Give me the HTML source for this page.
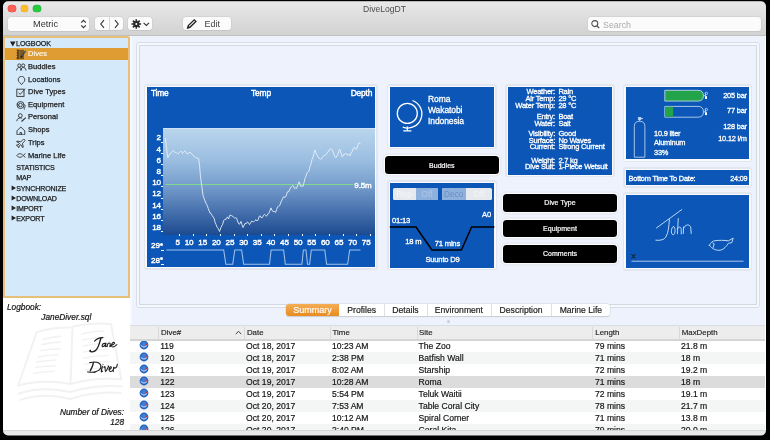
<!DOCTYPE html><html><head><meta charset="utf-8"><style>
*{margin:0;padding:0;box-sizing:border-box}
html,body{width:770px;height:440px;overflow:hidden;background:#000}
body{font-family:"Liberation Sans",sans-serif;position:relative}
.a{position:absolute}
.t{white-space:nowrap;line-height:1}
#win{left:0;top:0;width:770px;height:440px;background:#fff;will-change:transform}
.btn{background:#fbfbfb;border-radius:3px;box-shadow:0 0 0 0.5px #c9c9c9,0 0.6px 0.4px #b5b5b5}
</style></head><body><div id="win" class="a">
<div class="a" style="left:3.00px;top:1.30px;width:763.00px;height:34.30px;background:linear-gradient(#e8e8e8,#d2d2d2);border-top:1px solid #f6f6f6;border-bottom:1px solid #c0c0c0"></div>
<div class="a" style="left:7.80px;top:4.50px;width:7.80px;height:7.80px;border-radius:50%;background:#fc5f57;box-shadow:0 0 0 0.35px #e0443e"></div>
<div class="a" style="left:20.50px;top:4.50px;width:7.80px;height:7.80px;border-radius:50%;background:#fdbc2e;box-shadow:0 0 0 0.35px #dea123"></div>
<div class="a" style="left:33.40px;top:4.50px;width:7.80px;height:7.80px;border-radius:50%;background:#29c840;box-shadow:0 0 0 0.35px #1aab29"></div>
<div class="a t" style="left:284.60px;width:200px;text-align:center;top:5.00px;font-size:8.6px;color:#4d4d4d;">DiveLogDT</div>
<div class="a btn" style="left:8.00px;top:16.90px;width:81.30px;height:14.30px;"></div>
<div class="a t" style="left:-54.50px;width:200px;text-align:center;top:20.00px;font-size:9.2px;color:#333;">Metric</div>
<svg class="a" style="left:80.3px;top:19px" width="7" height="10" viewBox="0 0 7 10"><path d="M1.2 3.6L3.5 1.3L5.8 3.6M1.2 6.4L3.5 8.7L5.8 6.4" fill="none" stroke="#333" stroke-width="1.1"/></svg>
<div class="a btn" style="left:94.80px;top:17.40px;width:28.30px;height:13.10px;"></div>
<div class="a" style="left:108.50px;top:17.40px;width:0.50px;height:13.10px;background:#d4d4d4"></div>
<svg class="a" style="left:98.5px;top:19px" width="7" height="10" viewBox="0 0 7 10"><path d="M5 1.2L1.8 5L5 8.8" fill="none" stroke="#333" stroke-width="1.1"/></svg>
<svg class="a" style="left:112.5px;top:19px" width="7" height="10" viewBox="0 0 7 10"><path d="M2 1.2L5.2 5L2 8.8" fill="none" stroke="#333" stroke-width="1.1"/></svg>
<div class="a btn" style="left:128.40px;top:17.40px;width:23.90px;height:13.10px;"></div>
<svg class="a" style="left:130.6px;top:18.7px" width="20" height="10" viewBox="0 0 20 10"><g transform="translate(5.3,5)" fill="#2a2a2a"><circle r="3.1"/><path d="M0 -4.8V4.8M-4.8 0H4.8M-3.4 -3.4L3.4 3.4M-3.4 3.4L3.4 -3.4" stroke="#2a2a2a" stroke-width="1.6"/><circle r="1" fill="#fbfbfb"/></g><path d="M12.6 3.8L15.3 6.4L18 3.8" fill="none" stroke="#333" stroke-width="1.1"/></svg>
<div class="a btn" style="left:183.10px;top:17.40px;width:47.60px;height:13.10px;"></div>
<svg class="a" style="left:185.8px;top:17.5px" width="12" height="12" viewBox="0 0 12 12"><path d="M1.6 10L2.3 7.6L8.3 1.8L9.9 3.4L3.9 9.3Z" fill="none" stroke="#222" stroke-width="1.3"/><path d="M1.6 10L2.3 7.6L3.9 9.3Z" fill="#222"/></svg>
<div class="a t" style="left:204.60px;top:20.00px;font-size:9px;color:#444;">Edit</div>
<div class="a btn" style="left:588.40px;top:17.40px;width:173.00px;height:13.80px;"></div>
<svg class="a" style="left:590px;top:19px" width="10" height="10" viewBox="0 0 10 10"><circle cx="4.8" cy="4.6" r="3" fill="none" stroke="#4a4a4a" stroke-width="1.05"/><path d="M7 6.9L9.2 9.1" stroke="#4a4a4a" stroke-width="1.3"/></svg>
<div class="a t" style="left:603.10px;top:21.00px;font-size:8.8px;color:#a9a9a9;">Search</div>
<div class="a" style="left:3.00px;top:35.50px;width:127.00px;height:262.00px;background:#d4eafb;border:2px solid #e8bf78;border-radius:0 2px 0 0"></div>
<div class="a" style="left:5.00px;top:48.30px;width:123.00px;height:11.30px;background:#df9c33"></div>
<svg class="a" style="left:10.3px;top:40.6px" width="6" height="6" viewBox="0 0 6 6"><path d="M0 0.6H5.6L2.8 5.6Z" fill="#222"/></svg>
<div class="a t" style="left:16.10px;top:41.00px;font-size:7.1px;color:#1c1c1c;-webkit-text-stroke:0.25px #1c1c1c;letter-spacing:-0.1px;">LOGBOOK</div>
<div class="a t" style="left:28.00px;top:50.00px;font-size:7.5px;color:#fdf6ea;-webkit-text-stroke:0.18px #fdf6ea;letter-spacing:0.05px;">Dives</div>
<div class="a t" style="left:28.00px;top:63.00px;font-size:7.5px;color:#1c1c1c;-webkit-text-stroke:0.25px #1c1c1c;letter-spacing:0.05px;">Buddies</div>
<div class="a t" style="left:28.00px;top:76.00px;font-size:7.5px;color:#1c1c1c;-webkit-text-stroke:0.25px #1c1c1c;letter-spacing:0.05px;">Locations</div>
<div class="a t" style="left:28.00px;top:88.00px;font-size:7.5px;color:#1c1c1c;-webkit-text-stroke:0.25px #1c1c1c;letter-spacing:0.05px;">Dive Types</div>
<div class="a t" style="left:28.00px;top:101.00px;font-size:7.5px;color:#1c1c1c;-webkit-text-stroke:0.25px #1c1c1c;letter-spacing:0.05px;">Equipment</div>
<div class="a t" style="left:28.00px;top:113.00px;font-size:7.5px;color:#1c1c1c;-webkit-text-stroke:0.25px #1c1c1c;letter-spacing:0.05px;">Personal</div>
<div class="a t" style="left:28.00px;top:126.00px;font-size:7.5px;color:#1c1c1c;-webkit-text-stroke:0.25px #1c1c1c;letter-spacing:0.05px;">Shops</div>
<div class="a t" style="left:28.00px;top:139.00px;font-size:7.5px;color:#1c1c1c;-webkit-text-stroke:0.25px #1c1c1c;letter-spacing:0.05px;">Trips</div>
<div class="a t" style="left:28.00px;top:152.00px;font-size:7.5px;color:#1c1c1c;-webkit-text-stroke:0.25px #1c1c1c;letter-spacing:0.05px;">Marine Life</div>
<div class="a t" style="left:16.20px;top:165.00px;font-size:7.1px;color:#1c1c1c;-webkit-text-stroke:0.25px #1c1c1c;letter-spacing:-0.15px;">STATISTICS</div>
<div class="a t" style="left:16.20px;top:175.00px;font-size:7.1px;color:#1c1c1c;-webkit-text-stroke:0.25px #1c1c1c;letter-spacing:-0.15px;">MAP</div>
<div class="a t" style="left:16.20px;top:186.00px;font-size:7.1px;color:#1c1c1c;-webkit-text-stroke:0.25px #1c1c1c;letter-spacing:-0.15px;">SYNCHRONIZE</div>
<div class="a t" style="left:16.20px;top:196.00px;font-size:7.1px;color:#1c1c1c;-webkit-text-stroke:0.25px #1c1c1c;letter-spacing:-0.15px;">DOWNLOAD</div>
<div class="a t" style="left:16.20px;top:206.00px;font-size:7.1px;color:#1c1c1c;-webkit-text-stroke:0.25px #1c1c1c;letter-spacing:-0.15px;">IMPORT</div>
<div class="a t" style="left:16.20px;top:216.00px;font-size:7.1px;color:#1c1c1c;-webkit-text-stroke:0.25px #1c1c1c;letter-spacing:-0.15px;">EXPORT</div>
<svg class="a" style="left:10.8px;top:184.8px" width="6" height="6" viewBox="0 0 6 6"><path d="M0.6 0.4V5.6L5 3Z" fill="#222"/></svg>
<svg class="a" style="left:10.8px;top:195.0px" width="6" height="6" viewBox="0 0 6 6"><path d="M0.6 0.4V5.6L5 3Z" fill="#222"/></svg>
<svg class="a" style="left:10.8px;top:205.20000000000002px" width="6" height="6" viewBox="0 0 6 6"><path d="M0.6 0.4V5.6L5 3Z" fill="#222"/></svg>
<svg class="a" style="left:10.8px;top:215.4px" width="6" height="6" viewBox="0 0 6 6"><path d="M0.6 0.4V5.6L5 3Z" fill="#222"/></svg>
<svg class="a" style="left:16px;top:48.5px" width="11" height="11" viewBox="0 0 11 11"><rect x="0.8" y="0.8" width="7.2" height="9.4" fill="#7d5a22"/><rect x="0.8" y="0.8" width="1.8" height="9.4" fill="#5a3d12"/><path d="M3.5 2V9.2" stroke="#a07a3a" stroke-width="0.5"/><path d="M0.3 2.5H1.2M0.3 5H1.2M0.3 7.5H1.2" stroke="#f6c64a" stroke-width="0.9"/><path d="M5.4 7.6L9.6 1.8" stroke="#2f4a66" stroke-width="1.3"/><path d="M5 8.3L5.8 7.2" stroke="#111" stroke-width="1.5"/></svg>
<svg class="a" style="left:16px;top:62.5px" width="11" height="8" viewBox="0 0 11 8"><circle cx="3.3" cy="2.5" r="1.6" stroke="#3a3a3a" stroke-width="0.95" fill="none"/><circle cx="7.2" cy="2.5" r="1.6" stroke="#3a3a3a" stroke-width="0.95" fill="none"/><path d="M0.6 7.5C0.8 5.2 2 4.5 3.3 4.5S5.6 5.2 5.8 7.5M4.4 7.5C4.6 5.2 5.9 4.5 7.2 4.5S9.8 5.2 10 7.5" stroke="#3a3a3a" stroke-width="0.95" fill="none"/></svg>
<svg class="a" style="left:16.5px;top:75.5px" width="9" height="9.5" viewBox="0 0 9 9.5"><path d="M4.5 8.6L2.6 6.4A3.3 3.3 0 1 1 6.4 6.4Z" stroke="#3a3a3a" stroke-width="0.95" fill="none"/></svg>
<svg class="a" style="left:16px;top:87.5px" width="10" height="9" viewBox="0 0 10 9"><rect x="0.8" y="1.2" width="7.2" height="7.2" stroke="#3a3a3a" stroke-width="0.95" fill="none"/><path d="M2.5 4.6L4.2 6.4L9.2 0.8" stroke="#3a3a3a" stroke-width="0.9" fill="none"/></svg>
<svg class="a" style="left:16px;top:99.5px" width="11" height="10" viewBox="0 0 11 10"><circle cx="4.5" cy="5" r="3.5" stroke="#3a3a3a" stroke-width="0.95" fill="none"/><circle cx="4.5" cy="5" r="1.8" stroke="#3a3a3a" stroke-width="0.95" fill="none"/><path d="M1.2 3.6L3 6.4M7.6 4.5C9 4.5 9.6 6 8.8 7.2S7.8 9.2 8.8 9.5" stroke="#3a3a3a" stroke-width="0.95" fill="none"/></svg>
<svg class="a" style="left:16px;top:113px" width="11" height="9" viewBox="0 0 11 9"><circle cx="4.3" cy="2.6" r="1.9" stroke="#3a3a3a" stroke-width="0.95" fill="none"/><path d="M0.8 8.2C1 5.8 2.4 5 4.3 5C5.2 5 5.8 5.2 6.2 5.5" stroke="#3a3a3a" stroke-width="0.95" fill="none"/><path d="M5.5 8.5L9.8 4.6" stroke="#3a3a3a" stroke-width="1.2"/></svg>
<svg class="a" style="left:16.2px;top:125.5px" width="10" height="9.5" viewBox="0 0 10 9.5"><path d="M1 4.8L4.8 1L8.8 4.8V8.8H1Z" stroke="#3a3a3a" stroke-width="0.95" fill="none"/><path d="M4 8.8V6.6H5.6V8.8" stroke="#3a3a3a" stroke-width="0.95" fill="none"/></svg>
<svg class="a" style="left:16.2px;top:138.6px" width="10" height="9" viewBox="0 0 10 9"><path d="M8.6 0.6C9.3 0.9 9.2 1.7 8.4 2.5L6.4 4.4L7.3 8.2L6.5 8.6L4.8 5.6L3 7.2L3.2 8.4L2.6 8.8L1.8 7.2L0.4 6.4L0.8 5.8L2 6L3.6 4.4L0.6 2.7L1 2L4.8 2.8L6.8 0.9C7.5 0.3 8.2 0.3 8.6 0.6Z" stroke="#3a3a3a" stroke-width="0.95" fill="none"/></svg>
<svg class="a" style="left:16.2px;top:152.3px" width="10" height="7" viewBox="0 0 10 7"><path d="M0.8 3.5C2.5 1.2 5.2 1 7.2 3.5C5.2 6 2.5 5.8 0.8 3.5ZM7.2 3.5L9.4 1.6M7.2 3.5L9.4 5.4" stroke="#3a3a3a" stroke-width="0.95" fill="none"/></svg>
<svg class="a" style="left:0;top:0" width="770" height="440" viewBox="0 0 770 440"><g fill="none" stroke="#f2f2f2" stroke-width="2" stroke-linecap="round" stroke-linejoin="round"><path d="M18.2 385.5L36.6 332.3Q52 327 70 327.5"/><path d="M74.3 326.2Q92 322 111 324.1L121.3 379.3"/><path d="M72.5 327L70.5 384"/><path d="M18.2 385.5Q42 379 70.5 384Q95 377 121.3 379.3"/><path d="M18.5 393.7Q42 386 70 392Q96 384 122 386.5"/><path d="M20.5 399.8Q44 392 70 399Q96 391 121 393"/><path d="M42.7 339.5Q52 337 60.1 336.4M41.7 344.6Q51 342.5 60.1 342.1M40.7 350.7Q50 348.8 60.1 348.7M38.6 356.9Q48 355 58 354.8M36.6 362Q46 360.5 56 360M35.6 367.5Q45 366 55 365.8M33.5 373.2Q43 371.5 54 371.2" stroke-width="1.6"/><path d="M82 334Q92 331 104 331M82.5 340Q93 337.5 105 337.5M83 346Q94 343.5 106 343.5M83.5 352Q95 349.5 107 349.5M84 358Q96 355.5 108 355.5M84.5 364Q97 361.5 109.5 361.5M85 370Q98 367.5 111 367.5" stroke-width="1.6"/></g></svg>
<div class="a t" style="left:7.00px;top:303.00px;font-size:8.3px;color:#141414;font-style:italic;-webkit-text-stroke:0.2px #141414">Logbook:</div>
<div class="a t" style="left:41.30px;top:313.00px;font-size:8.3px;color:#141414;font-style:italic;-webkit-text-stroke:0.2px #141414">JaneDiver.sql</div>
<svg class="a" style="left:0;top:0" width="770" height="440" viewBox="0 0 770 440"><g fill="none" stroke="#1e1e1e" stroke-linecap="round" stroke-linejoin="round"><path d="M94.70 341.00C95.05 340.70 96.03 339.68 96.80 339.20C97.57 338.72 98.28 338.37 99.30 338.10C100.32 337.83 102.30 337.68 102.90 337.60" stroke-width="1.20"/><path d="M100.90 338.10C100.68 338.85 100.15 340.98 99.60 342.60C99.05 344.22 98.30 346.47 97.60 347.80C96.90 349.13 96.27 349.93 95.40 350.60C94.53 351.27 93.30 351.68 92.40 351.80C91.50 351.92 90.33 351.55 90.00 351.30C89.67 351.05 90.33 350.47 90.40 350.30" stroke-width="1.35"/><path d="M106.00 343.20C105.60 343.25 104.25 343.10 103.60 343.50C102.95 343.90 102.22 345.05 102.10 345.60C101.98 346.15 102.42 346.88 102.90 346.80C103.38 346.72 104.48 345.70 105.00 345.10C105.52 344.50 105.95 342.97 106.00 343.20C106.05 343.43 105.20 346.02 105.30 346.50C105.40 346.98 106.38 346.17 106.60 346.10" stroke-width="1.10"/><path d="M107.10 346.60C107.20 346.17 107.30 344.60 107.70 344.00C108.10 343.40 109.07 343.00 109.50 343.00C109.93 343.00 110.25 343.42 110.30 344.00C110.35 344.58 109.70 346.15 109.80 346.50C109.90 346.85 110.72 346.17 110.90 346.10" stroke-width="1.10"/><path d="M111.10 345.50C111.50 345.30 112.92 344.75 113.50 344.30C114.08 343.85 114.67 343.10 114.60 342.80C114.53 342.50 113.58 342.25 113.10 342.50C112.62 342.75 111.93 343.68 111.70 344.30C111.47 344.92 111.37 345.78 111.70 346.20C112.03 346.62 112.83 347.07 113.70 346.80C114.57 346.53 116.37 344.97 116.90 344.60" stroke-width="1.05"/><path d="M93.40 362.60C93.22 363.25 92.83 365.12 92.30 366.50C91.77 367.88 90.55 370.17 90.20 370.90" stroke-width="1.35"/><path d="M87.70 371.90C88.25 371.95 89.78 372.17 91.00 372.20C92.22 372.23 94.33 372.12 95.00 372.10" stroke-width="1.10"/><path d="M89.80 362.60C90.50 362.50 92.58 361.98 94.00 362.00C95.42 362.02 97.15 362.10 98.30 362.70C99.45 363.30 100.68 364.45 100.90 365.60C101.12 366.75 100.68 368.48 99.60 369.60C98.52 370.72 95.27 371.85 94.40 372.30" stroke-width="1.15"/><path d="M102.40 366.30C102.22 367.17 101.27 370.68 101.30 371.50C101.33 372.32 102.38 371.25 102.60 371.20" stroke-width="1.15"/><path d="M103.90 367.30C104.08 367.22 104.73 366.08 105.00 366.80C105.27 367.52 104.93 371.60 105.50 371.60C106.07 371.60 107.97 367.75 108.40 366.80C108.83 365.85 108.15 366.05 108.10 365.90" stroke-width="1.10"/><path d="M109.10 369.80C109.42 369.57 110.65 368.90 111.00 368.40C111.35 367.90 111.40 367.00 111.20 366.80C111.00 366.60 110.15 366.63 109.80 367.20C109.45 367.77 108.95 369.47 109.10 370.20C109.25 370.93 110.10 371.58 110.70 371.60C111.30 371.62 112.37 370.52 112.70 370.30" stroke-width="1.05"/><path d="M113.20 371.60C113.28 370.88 113.45 367.87 113.70 367.30C113.95 366.73 114.22 368.27 114.70 368.20C115.18 368.13 116.17 367.57 116.60 366.90C117.03 366.23 117.18 364.65 117.30 364.20" stroke-width="1.10"/><circle cx="103" cy="364.3" r="0.55" fill="#1e1e1e" stroke="none"/></g></svg>
<div class="a t" style="right:646.00px;text-align:right;top:408.00px;font-size:8.3px;color:#141414;font-style:italic;-webkit-text-stroke:0.2px #141414">Number of Dives:</div>
<div class="a t" style="right:646.00px;text-align:right;top:418.00px;font-size:8.3px;color:#141414;font-style:italic;-webkit-text-stroke:0.2px #141414">128</div>
<div class="a" style="left:130.00px;top:35.50px;width:635.00px;height:289.70px;background:#edf2fc"></div>
<div class="a" style="left:130.00px;top:35.50px;width:1.50px;height:289.70px;background:#f6f9fe"></div>
<div class="a" style="left:135.80px;top:41.80px;width:623.80px;height:265.80px;border:1px solid #d9dde5;background:#f5f8fd;border-radius:3px"></div>
<div class="a" style="left:139.00px;top:45.00px;width:617.60px;height:260.20px;border:1.5px solid #d4d9e1;background:#edf2fc"></div>
<div class="a" style="left:143.90px;top:84.10px;width:233.80px;height:185.60px;background:#e2e6ee;border-radius:3px"></div>
<div class="a" style="left:145.30px;top:85.50px;width:231.00px;height:182.80px;background:#f9fafd;border-radius:1px"></div>
<div class="a" style="left:146.60px;top:86.80px;width:228.40px;height:180.20px;background:#0b56b6"></div>
<div class="a" style="left:387.00px;top:84.10px;width:109.70px;height:65.30px;background:#e2e6ee;border-radius:3px"></div>
<div class="a" style="left:388.40px;top:85.50px;width:106.90px;height:62.50px;background:#f9fafd;border-radius:1px"></div>
<div class="a" style="left:389.70px;top:86.80px;width:104.30px;height:59.90px;background:#0b56b6"></div>
<div class="a" style="left:505.20px;top:84.10px;width:109.60px;height:93.40px;background:#e2e6ee;border-radius:3px"></div>
<div class="a" style="left:506.60px;top:85.50px;width:106.80px;height:90.60px;background:#f9fafd;border-radius:1px"></div>
<div class="a" style="left:507.90px;top:86.80px;width:104.20px;height:88.00px;background:#0b56b6"></div>
<div class="a" style="left:622.90px;top:84.20px;width:129.20px;height:78.00px;background:#e2e6ee;border-radius:3px"></div>
<div class="a" style="left:624.30px;top:85.60px;width:126.40px;height:75.20px;background:#f9fafd;border-radius:1px"></div>
<div class="a" style="left:625.60px;top:86.90px;width:123.80px;height:72.60px;background:#0b56b6"></div>
<div class="a" style="left:623.10px;top:167.20px;width:128.80px;height:20.50px;background:#e2e6ee;border-radius:3px"></div>
<div class="a" style="left:624.50px;top:168.60px;width:126.00px;height:17.70px;background:#f9fafd;border-radius:1px"></div>
<div class="a" style="left:625.80px;top:169.90px;width:123.40px;height:15.10px;background:#0b56b6"></div>
<div class="a" style="left:623.00px;top:192.30px;width:129.00px;height:78.30px;background:#e2e6ee;border-radius:3px"></div>
<div class="a" style="left:624.40px;top:193.70px;width:126.20px;height:75.50px;background:#f9fafd;border-radius:1px"></div>
<div class="a" style="left:625.70px;top:195.00px;width:123.60px;height:72.90px;background:#0b56b6"></div>
<div class="a" style="left:387.10px;top:180.30px;width:110.00px;height:90.10px;background:#e2e6ee;border-radius:3px"></div>
<div class="a" style="left:388.50px;top:181.70px;width:107.20px;height:87.30px;background:#f9fafd;border-radius:1px"></div>
<div class="a" style="left:389.80px;top:183.00px;width:104.60px;height:84.70px;background:#0b56b6"></div>
<div class="a" style="left:385.10px;top:156.00px;width:113.50px;height:18.10px;background:#000;border-radius:3.5px;box-shadow:0 0 0 1.2px #fbfcfe,0 0 0 2.4px #e6e9f0"></div>
<div class="a t" style="left:341.85px;width:200px;text-align:center;top:162.00px;font-size:7px;color:#f2f2f2;-webkit-text-stroke:0.22px #fff;letter-spacing:0.05px">Buddies</div>
<div class="a" style="left:503.10px;top:194.30px;width:113.90px;height:18.10px;background:#000;border-radius:3.5px;box-shadow:0 0 0 1.2px #fbfcfe,0 0 0 2.4px #e6e9f0"></div>
<div class="a t" style="left:460.05px;width:200px;text-align:center;top:199.00px;font-size:7px;color:#f2f2f2;-webkit-text-stroke:0.22px #fff;letter-spacing:0.05px">Dive Type</div>
<div class="a" style="left:503.10px;top:219.70px;width:113.90px;height:17.80px;background:#000;border-radius:3.5px;box-shadow:0 0 0 1.2px #fbfcfe,0 0 0 2.4px #e6e9f0"></div>
<div class="a t" style="left:460.05px;width:200px;text-align:center;top:225.00px;font-size:7px;color:#f2f2f2;-webkit-text-stroke:0.22px #fff;letter-spacing:0.05px">Equipment</div>
<div class="a" style="left:503.10px;top:245.20px;width:113.90px;height:18.00px;background:#000;border-radius:3.5px;box-shadow:0 0 0 1.2px #fbfcfe,0 0 0 2.4px #e6e9f0"></div>
<div class="a t" style="left:460.05px;width:200px;text-align:center;top:250.00px;font-size:7px;color:#f2f2f2;-webkit-text-stroke:0.22px #fff;letter-spacing:0.05px">Comments</div>
<div class="a t" style="left:150.90px;top:89.00px;font-size:8.4px;color:#ffffff;-webkit-text-stroke:0.42px #fff;letter-spacing:-0.15px">Time</div>
<div class="a t" style="left:161.00px;width:200px;text-align:center;top:89.00px;font-size:8.4px;color:#ffffff;-webkit-text-stroke:0.42px #fff;letter-spacing:-0.15px">Temp</div>
<div class="a t" style="right:397.70px;text-align:right;top:89.00px;font-size:8.4px;color:#ffffff;-webkit-text-stroke:0.42px #fff;letter-spacing:-0.15px">Depth</div>
<div class="a" style="left:162.50px;top:128.30px;width:212.50px;height:107.20px;background:linear-gradient(#b9d5ed 0%,#9abde0 30%,#789fcd 52%,#4a74b0 76%,#1c4a8f 100%);border-top:0.6px solid #cfe2f4"></div>
<div class="a t" style="right:609.00px;text-align:right;top:134.00px;font-size:8.1px;color:#ffffff;-webkit-text-stroke:0.4px #fff;letter-spacing:-0.1px">2</div>
<div class="a" style="left:161.20px;top:141.60px;width:2.20px;height:0.80px;background:#fff"></div>
<div class="a t" style="right:609.00px;text-align:right;top:146.00px;font-size:8.1px;color:#ffffff;-webkit-text-stroke:0.4px #fff;letter-spacing:-0.1px">4</div>
<div class="a" style="left:161.20px;top:152.80px;width:2.20px;height:0.80px;background:#fff"></div>
<div class="a t" style="right:609.00px;text-align:right;top:157.00px;font-size:8.1px;color:#ffffff;-webkit-text-stroke:0.4px #fff;letter-spacing:-0.1px">6</div>
<div class="a" style="left:161.20px;top:164.00px;width:2.20px;height:0.80px;background:#fff"></div>
<div class="a t" style="right:609.00px;text-align:right;top:168.00px;font-size:8.1px;color:#ffffff;-webkit-text-stroke:0.4px #fff;letter-spacing:-0.1px">8</div>
<div class="a" style="left:161.20px;top:175.20px;width:2.20px;height:0.80px;background:#fff"></div>
<div class="a t" style="right:609.00px;text-align:right;top:179.00px;font-size:8.1px;color:#ffffff;-webkit-text-stroke:0.4px #fff;letter-spacing:-0.1px">10</div>
<div class="a" style="left:161.20px;top:186.40px;width:2.20px;height:0.80px;background:#fff"></div>
<div class="a t" style="right:609.00px;text-align:right;top:190.00px;font-size:8.1px;color:#ffffff;-webkit-text-stroke:0.4px #fff;letter-spacing:-0.1px">12</div>
<div class="a" style="left:161.20px;top:197.60px;width:2.20px;height:0.80px;background:#fff"></div>
<div class="a t" style="right:609.00px;text-align:right;top:202.00px;font-size:8.1px;color:#ffffff;-webkit-text-stroke:0.4px #fff;letter-spacing:-0.1px">14</div>
<div class="a" style="left:161.20px;top:208.80px;width:2.20px;height:0.80px;background:#fff"></div>
<div class="a t" style="right:609.00px;text-align:right;top:213.00px;font-size:8.1px;color:#ffffff;-webkit-text-stroke:0.4px #fff;letter-spacing:-0.1px">16</div>
<div class="a" style="left:161.20px;top:220.00px;width:2.20px;height:0.80px;background:#fff"></div>
<div class="a t" style="right:609.00px;text-align:right;top:224.00px;font-size:8.1px;color:#ffffff;-webkit-text-stroke:0.4px #fff;letter-spacing:-0.1px">18</div>
<div class="a" style="left:161.20px;top:231.20px;width:2.20px;height:0.80px;background:#fff"></div>
<div class="a" style="left:179.05px;top:234.30px;width:0.90px;height:2.00px;background:#f0f4fa"></div>
<div class="a t" style="right:590.20px;text-align:right;top:239.00px;font-size:8.1px;color:#ffffff;-webkit-text-stroke:0.4px #fff;letter-spacing:-0.1px">5</div>
<div class="a" style="left:192.68px;top:234.30px;width:0.90px;height:2.00px;background:#f0f4fa"></div>
<div class="a t" style="right:576.57px;text-align:right;top:239.00px;font-size:8.1px;color:#ffffff;-webkit-text-stroke:0.4px #fff;letter-spacing:-0.1px">10</div>
<div class="a" style="left:206.31px;top:234.30px;width:0.90px;height:2.00px;background:#f0f4fa"></div>
<div class="a t" style="right:562.93px;text-align:right;top:239.00px;font-size:8.1px;color:#ffffff;-webkit-text-stroke:0.4px #fff;letter-spacing:-0.1px">15</div>
<div class="a" style="left:219.95px;top:234.30px;width:0.90px;height:2.00px;background:#f0f4fa"></div>
<div class="a t" style="right:549.30px;text-align:right;top:239.00px;font-size:8.1px;color:#ffffff;-webkit-text-stroke:0.4px #fff;letter-spacing:-0.1px">20</div>
<div class="a" style="left:233.58px;top:234.30px;width:0.90px;height:2.00px;background:#f0f4fa"></div>
<div class="a t" style="right:535.67px;text-align:right;top:239.00px;font-size:8.1px;color:#ffffff;-webkit-text-stroke:0.4px #fff;letter-spacing:-0.1px">25</div>
<div class="a" style="left:247.21px;top:234.30px;width:0.90px;height:2.00px;background:#f0f4fa"></div>
<div class="a t" style="right:522.04px;text-align:right;top:239.00px;font-size:8.1px;color:#ffffff;-webkit-text-stroke:0.4px #fff;letter-spacing:-0.1px">30</div>
<div class="a" style="left:260.85px;top:234.30px;width:0.90px;height:2.00px;background:#f0f4fa"></div>
<div class="a t" style="right:508.40px;text-align:right;top:239.00px;font-size:8.1px;color:#ffffff;-webkit-text-stroke:0.4px #fff;letter-spacing:-0.1px">35</div>
<div class="a" style="left:274.48px;top:234.30px;width:0.90px;height:2.00px;background:#f0f4fa"></div>
<div class="a t" style="right:494.77px;text-align:right;top:239.00px;font-size:8.1px;color:#ffffff;-webkit-text-stroke:0.4px #fff;letter-spacing:-0.1px">40</div>
<div class="a" style="left:288.11px;top:234.30px;width:0.90px;height:2.00px;background:#f0f4fa"></div>
<div class="a t" style="right:481.14px;text-align:right;top:239.00px;font-size:8.1px;color:#ffffff;-webkit-text-stroke:0.4px #fff;letter-spacing:-0.1px">45</div>
<div class="a" style="left:301.74px;top:234.30px;width:0.90px;height:2.00px;background:#f0f4fa"></div>
<div class="a t" style="right:467.51px;text-align:right;top:239.00px;font-size:8.1px;color:#ffffff;-webkit-text-stroke:0.4px #fff;letter-spacing:-0.1px">50</div>
<div class="a" style="left:315.38px;top:234.30px;width:0.90px;height:2.00px;background:#f0f4fa"></div>
<div class="a t" style="right:453.87px;text-align:right;top:239.00px;font-size:8.1px;color:#ffffff;-webkit-text-stroke:0.4px #fff;letter-spacing:-0.1px">55</div>
<div class="a" style="left:329.01px;top:234.30px;width:0.90px;height:2.00px;background:#f0f4fa"></div>
<div class="a t" style="right:440.24px;text-align:right;top:239.00px;font-size:8.1px;color:#ffffff;-webkit-text-stroke:0.4px #fff;letter-spacing:-0.1px">60</div>
<div class="a" style="left:342.64px;top:234.30px;width:0.90px;height:2.00px;background:#f0f4fa"></div>
<div class="a t" style="right:426.61px;text-align:right;top:239.00px;font-size:8.1px;color:#ffffff;-webkit-text-stroke:0.4px #fff;letter-spacing:-0.1px">65</div>
<div class="a" style="left:356.27px;top:234.30px;width:0.90px;height:2.00px;background:#f0f4fa"></div>
<div class="a t" style="right:412.98px;text-align:right;top:239.00px;font-size:8.1px;color:#ffffff;-webkit-text-stroke:0.4px #fff;letter-spacing:-0.1px">70</div>
<div class="a" style="left:369.91px;top:234.30px;width:0.90px;height:2.00px;background:#f0f4fa"></div>
<div class="a t" style="right:399.34px;text-align:right;top:239.00px;font-size:8.1px;color:#ffffff;-webkit-text-stroke:0.4px #fff;letter-spacing:-0.1px">75</div>
<div class="a t" style="right:610.20px;text-align:right;top:242.00px;font-size:8.1px;color:#ffffff;-webkit-text-stroke:0.4px #fff;letter-spacing:-0.1px">29</div>
<div class="a t" style="right:610.20px;text-align:right;top:257.00px;font-size:8.1px;color:#ffffff;-webkit-text-stroke:0.4px #fff;letter-spacing:-0.1px">28</div>
<div class="a" style="left:160.40px;top:242.70px;width:3.00px;height:3.00px;background:#fff;border-radius:50%"></div>
<div class="a" style="left:160.40px;top:257.00px;width:3.00px;height:3.00px;background:#fff;border-radius:50%"></div>
<div class="a" style="left:161.20px;top:249.80px;width:2.40px;height:0.90px;background:#fff"></div>
<div class="a" style="left:161.20px;top:264.10px;width:2.40px;height:0.90px;background:#fff"></div>
<svg class="a" style="left:0;top:0" width="770" height="440" viewBox="0 0 770 440"><line x1="165.5" y1="184.5" x2="353" y2="184.5" stroke="#7fd88c" stroke-width="1.1"/><polyline points="165.4,138.2 166.5,148.0 167.8,157.6 168.9,155.8 170.0,154.0 171.0,152.9 172.0,151.7 173.0,150.6 174.2,151.6 175.5,152.5 176.4,152.9 177.4,153.3 178.3,153.7 179.7,152.3 181.0,151.0 182.5,153.5 183.7,152.1 184.8,150.6 185.9,152.2 187.0,153.8 188.0,153.3 189.0,152.9 190.0,152.4 191.2,153.4 192.5,154.5 193.8,156.1 195.2,157.6 196.3,157.9 197.5,158.1 198.6,158.4 199.6,166.0 200.5,177.2 201.8,186.3 203.0,195.5 204.0,198.2 205.0,201.0 206.1,203.5 207.2,205.4 208.3,208.6 210.0,213.1 211.1,213.5 212.2,215.7 213.1,217.0 214.0,217.9 215.0,222.2 216.0,224.4 217.2,227.5 218.3,228.4 219.5,231.5 221.0,227.3 222.7,224.2 223.6,220.8 224.5,219.5 225.6,219.7 226.6,217.7 227.6,217.2 228.5,219.0 230.0,214.9 230.9,215.5 231.8,215.7 233.5,217.0 234.6,218.0 235.7,217.7 236.6,218.2 237.5,221.0 238.6,223.7 239.6,224.2 241.0,221.4 242.0,224.7 243.0,227.5 244.0,225.7 245.0,223.4 246.2,223.7 247.5,221.8 248.5,223.2 249.5,224.6 250.6,222.9 251.6,221.1 252.7,221.6 253.8,221.8 255.0,220.5 256.0,219.7 257.0,221.0 258.1,219.8 259.2,216.4 260.1,215.8 261.0,217.5 262.1,217.8 263.3,215.8 264.4,214.3 265.4,215.2 266.5,216.2 267.6,214.1 268.6,213.7 269.7,211.2 271.0,207.9 272.0,210.5 273.0,211.3 274.4,211.6 275.7,212.3 276.6,209.6 277.5,206.9 278.6,206.3 279.6,205.8 281.0,202.0 282.5,198.8 283.5,196.9 285.0,197.4 286.2,195.8 287.4,191.9 289.0,191.5 290.5,187.4 291.6,186.6 292.7,185.7 293.6,186.3 294.5,188.7 295.6,187.8 296.6,188.4 298.0,184.5 299.2,181.8 300.1,184.2 301.0,186.7 302.1,185.8 303.1,186.3 304.1,182.3 305.0,178.3 306.0,176.2 307.0,172.7 308.0,171.7 309.0,171.1 310.0,166.4 311.0,164.0 312.0,159.4 313.0,157.1 313.9,153.6 314.9,150.0 316.5,154.0 318.0,157.0 319.1,158.1 320.3,159.3 321.4,159.0 322.7,156.6 324.0,155.5 325.3,155.3 326.6,153.7 327.8,151.7 329.0,151.0 330.1,148.9 331.1,149.0 332.3,149.9 333.5,153.0 334.6,156.0 335.8,157.7 337.5,155.1 338.6,151.9 339.7,149.1 341.0,153.0 342.3,156.9 344.0,154.0 345.1,154.3 346.2,153.2 347.1,154.8 348.0,155.0 349.1,154.3 350.2,155.8 351.1,152.8 352.0,152.0 353.1,148.9 354.1,147.2 355.5,149.3 356.7,149.0 358.0,144.3 358.8,142.8 359.7,143.3 360.6,143.8" fill="none" stroke="#e6eef8" stroke-width="0.9" stroke-linejoin="round"/><polyline points="166.4,249.9 223.7,249.9 225.8,264.3 232.7,264.3 234.8,249.9 241.6,249.9 243.7,264.3 269.5,264.3 271.1,249.9 283.6,249.9 285.3,264.3 301.9,264.3 303.4,249.9 306.0,249.9 307.5,264.3 309.6,264.3 311.3,249.9 324.8,249.9 326.6,264.3 347.6,264.3 349.7,249.9 360.5,249.9" fill="none" stroke="#9fc0e8" stroke-width="1.05"/></svg>
<div class="a t" style="left:354.30px;top:182.00px;font-size:8px;color:#ffffff;-webkit-text-stroke:0.4px #fff;letter-spacing:-0.1px">9.5m</div>
<svg class="a" style="left:393px;top:98px" width="30" height="36" viewBox="393 98 30 36"><g fill="none" stroke="#fff" stroke-width="1.3"><circle cx="407.3" cy="113.4" r="10"/><path d="M412.5 100.5A13.2 13.2 0 0 1 402.8 127.2"/><path d="M407.3 126.5V130.6M403.2 130.8H411.4"/></g></svg>
<div class="a t" style="left:428.00px;top:95.00px;font-size:8.5px;color:#ffffff;-webkit-text-stroke:0.28px #fff;letter-spacing:-0.1px">Roma</div>
<div class="a t" style="left:428.00px;top:106.00px;font-size:8.5px;color:#ffffff;-webkit-text-stroke:0.28px #fff;letter-spacing:-0.1px">Wakatobi</div>
<div class="a t" style="left:428.00px;top:117.00px;font-size:8.5px;color:#ffffff;-webkit-text-stroke:0.28px #fff;letter-spacing:-0.1px">Indonesia</div>
<div class="a t" style="right:215.00px;text-align:right;top:88.00px;font-size:7.5px;color:#ffffff;-webkit-text-stroke:0.3px #fff;letter-spacing:-0.22px">Weather:</div>
<div class="a t" style="left:558.40px;top:88.00px;font-size:7.5px;color:#ffffff;-webkit-text-stroke:0.3px #fff;letter-spacing:-0.22px">Rain</div>
<div class="a t" style="right:215.00px;text-align:right;top:95.00px;font-size:7.5px;color:#ffffff;-webkit-text-stroke:0.3px #fff;letter-spacing:-0.22px">Air Temp:</div>
<div class="a t" style="left:558.40px;top:95.00px;font-size:7.5px;color:#ffffff;-webkit-text-stroke:0.3px #fff;letter-spacing:-0.22px">29 °C</div>
<div class="a t" style="right:215.00px;text-align:right;top:102.00px;font-size:7.5px;color:#ffffff;-webkit-text-stroke:0.3px #fff;letter-spacing:-0.22px">Water Temp:</div>
<div class="a t" style="left:558.40px;top:102.00px;font-size:7.5px;color:#ffffff;-webkit-text-stroke:0.3px #fff;letter-spacing:-0.22px">28 °C</div>
<div class="a t" style="right:215.00px;text-align:right;top:113.00px;font-size:7.5px;color:#ffffff;-webkit-text-stroke:0.3px #fff;letter-spacing:-0.22px">Entry:</div>
<div class="a t" style="left:558.40px;top:113.00px;font-size:7.5px;color:#ffffff;-webkit-text-stroke:0.3px #fff;letter-spacing:-0.22px">Boat</div>
<div class="a t" style="right:215.00px;text-align:right;top:120.00px;font-size:7.5px;color:#ffffff;-webkit-text-stroke:0.3px #fff;letter-spacing:-0.22px">Water:</div>
<div class="a t" style="left:558.40px;top:120.00px;font-size:7.5px;color:#ffffff;-webkit-text-stroke:0.3px #fff;letter-spacing:-0.22px">Salt</div>
<div class="a t" style="right:215.00px;text-align:right;top:130.00px;font-size:7.5px;color:#ffffff;-webkit-text-stroke:0.3px #fff;letter-spacing:-0.22px">Visibility:</div>
<div class="a t" style="left:558.40px;top:130.00px;font-size:7.5px;color:#ffffff;-webkit-text-stroke:0.3px #fff;letter-spacing:-0.22px">Good</div>
<div class="a t" style="right:215.00px;text-align:right;top:137.00px;font-size:7.5px;color:#ffffff;-webkit-text-stroke:0.3px #fff;letter-spacing:-0.22px">Surface:</div>
<div class="a t" style="left:558.40px;top:137.00px;font-size:7.5px;color:#ffffff;-webkit-text-stroke:0.3px #fff;letter-spacing:-0.22px">No Waves</div>
<div class="a t" style="right:215.00px;text-align:right;top:143.00px;font-size:7.5px;color:#ffffff;-webkit-text-stroke:0.3px #fff;letter-spacing:-0.22px">Current:</div>
<div class="a t" style="left:558.40px;top:143.00px;font-size:7.5px;color:#ffffff;-webkit-text-stroke:0.3px #fff;letter-spacing:-0.22px">Strong Current</div>
<div class="a t" style="right:215.00px;text-align:right;top:157.00px;font-size:7.5px;color:#ffffff;-webkit-text-stroke:0.3px #fff;letter-spacing:-0.22px">Weight:</div>
<div class="a t" style="left:558.40px;top:157.00px;font-size:7.5px;color:#ffffff;-webkit-text-stroke:0.3px #fff;letter-spacing:-0.22px">2.7 kg</div>
<div class="a t" style="right:215.00px;text-align:right;top:163.00px;font-size:7.5px;color:#ffffff;-webkit-text-stroke:0.3px #fff;letter-spacing:-0.22px">Dive Suit:</div>
<div class="a t" style="left:558.40px;top:163.00px;font-size:7.5px;color:#ffffff;-webkit-text-stroke:0.3px #fff;letter-spacing:-0.22px">1-Piece Wetsuit</div>
<svg class="a" style="left:0;top:0" width="770" height="440" viewBox="0 0 770 440"><g fill="none" stroke="#cfe0f5" stroke-width="0.8"><path d="M634.3 157.2V126.5Q634.3 121.2 639.6 121.2Q644.9 121.2 644.9 126.5V157.2Z"/><path d="M639.6 121.2V119.3"/><rect x="638.3" y="117.6" width="2.6" height="1.8" fill="#cfe0f5"/><path d="M641 118.5H643"/></g><path d="M664.8 90.3H698Q703.4 90.3 703.4 95.7Q703.4 101.1 698 101.1H664.8Z" fill="#23a44a" stroke="#cfe0f5" stroke-width="0.8"/><path d="M664.8 106.4H698Q703.4 106.4 703.4 111.8Q703.4 117.2 698 117.2H664.8Z" fill="none" stroke="#cfe0f5" stroke-width="0.8"/><rect x="665.2" y="106.8" width="8" height="10" fill="#23a44a"/><g fill="none" stroke="#cfe0f5" stroke-width="0.8"><path d="M703.4 95.7H705.5M705.5 93.5V98.5"/><circle cx="706.3" cy="93.4" r="1.2"/><path d="M703.4 111.8H705.5M705.5 109.6V114.6"/><circle cx="706.3" cy="109.5" r="1.2"/></g><rect x="705" y="96.2" width="2" height="2.8" fill="#fff"/><rect x="705" y="112.3" width="2" height="2.8" fill="#fff"/></svg>
<div class="a t" style="left:654.00px;top:130.00px;font-size:7.4px;color:#ffffff;-webkit-text-stroke:0.3px #fff;letter-spacing:-0.2px">10.9 liter</div>
<div class="a t" style="left:654.00px;top:139.00px;font-size:7.4px;color:#ffffff;-webkit-text-stroke:0.3px #fff;letter-spacing:-0.2px">Aluminum</div>
<div class="a t" style="left:654.00px;top:149.00px;font-size:7.4px;color:#ffffff;-webkit-text-stroke:0.3px #fff;letter-spacing:-0.2px">33%</div>
<div class="a t" style="right:23.20px;text-align:right;top:92.00px;font-size:7.4px;color:#ffffff;-webkit-text-stroke:0.3px #fff;letter-spacing:-0.2px">205 bar</div>
<div class="a t" style="right:23.20px;text-align:right;top:107.00px;font-size:7.4px;color:#ffffff;-webkit-text-stroke:0.3px #fff;letter-spacing:-0.2px">77 bar</div>
<div class="a t" style="right:23.20px;text-align:right;top:123.00px;font-size:7.4px;color:#ffffff;-webkit-text-stroke:0.3px #fff;letter-spacing:-0.2px">128 bar</div>
<div class="a t" style="right:23.20px;text-align:right;top:135.00px;font-size:7.4px;color:#ffffff;-webkit-text-stroke:0.3px #fff;letter-spacing:-0.2px">10.12 l/m</div>
<div class="a t" style="left:628.50px;top:175.00px;font-size:7.4px;color:#ffffff;-webkit-text-stroke:0.3px #fff;letter-spacing:-0.2px">Bottom Time To Date:</div>
<div class="a t" style="right:22.70px;text-align:right;top:175.00px;font-size:7.2px;color:#ffffff;-webkit-text-stroke:0.3px #fff;letter-spacing:-0.2px">24:09</div>
<svg class="a" style="left:0;top:0" width="770" height="440" viewBox="0 0 770 440"><g fill="none" stroke="#d3e3f7" stroke-width="0.9" stroke-linecap="round" stroke-linejoin="round"><path d="M656.4 228L681.8 209.6"/><path d="M669.4 219.5C668.8 226 668.6 233 665.5 237.5C663.5 240.3 659 240.6 655.8 240.2"/><path d="M673.5 226.5C671 226.5 670.5 234.5 673 234.8C675.5 235 676 226.8 673.5 226.5Z"/><path d="M678.3 218.5L677.4 233.8M677.5 229C678.5 226.5 681 226 681.2 229.5L681.3 234"/><path d="M683.3 233.5L683.5 227M683.4 229C684.5 224 690.5 223.5 690.8 228L691.2 233.5"/><path d="M709.4 245.2C711 242.5 712.5 241 715 240.7C719 240.2 724 240.2 728.4 240.8L733.2 238.1L731.8 242.6L728.4 243.3C726.5 246 724 249.5 720.5 250.2C716.5 250.8 711.8 249 709.4 245.2Z"/><path d="M713.2 247.5L714.2 243.8L712.8 243"/><path d="M631.9 261.2H743.2" stroke="#d6e5f8" stroke-width="0.8"/></g><path d="M631.5 254.2L635.3 258.6M635.3 254.2L631.5 258.6" stroke="#111" stroke-width="0.95"/></svg>
<div class="a" style="left:392.50px;top:188.00px;width:45.50px;height:11.50px;background:#e6e9ee;border-radius:1.5px"></div>
<div class="a" style="left:415.80px;top:188.00px;width:22.20px;height:11.50px;background:#8eb0dc;border-radius:0 1.5px 1.5px 0"></div>
<div class="a" style="left:441.60px;top:188.00px;width:50.00px;height:11.50px;background:#e6e9ee;border-radius:1.5px"></div>
<div class="a" style="left:441.60px;top:188.00px;width:24.40px;height:11.50px;background:#8eb0dc;border-radius:1.5px 0 0 1.5px"></div>
<div class="a t" style="left:389.20px;width:30px;text-align:center;top:190.00px;font-size:8.3px;color:#f6f7f9;-webkit-text-stroke:0.1px #f0f0f0">Rep</div>
<div class="a t" style="left:412.00px;width:30px;text-align:center;top:190.00px;font-size:8.3px;color:#b0c7e6;">Off</div>
<div class="a t" style="left:438.80px;width:30px;text-align:center;top:190.00px;font-size:8.3px;color:#6a8fc4;">Deco</div>
<div class="a t" style="left:464.00px;width:30px;text-align:center;top:190.00px;font-size:8.3px;color:#f4f5f7;">Off</div>
<svg class="a" style="left:0;top:0" width="770" height="440" viewBox="0 0 770 440"><polyline points="389.8,227 416,227 431.9,250 461.4,250 471.6,227 494.4,227" fill="none" stroke="#000" stroke-width="1.5"/></svg>
<div class="a t" style="right:279.00px;text-align:right;top:211.00px;font-size:7.6px;color:#ffffff;-webkit-text-stroke:0.3px #fff;letter-spacing:-0.2px">A0</div>
<div class="a t" style="left:392.00px;top:217.00px;font-size:7.6px;color:#ffffff;-webkit-text-stroke:0.3px #fff;letter-spacing:-0.2px">01:13</div>
<div class="a t" style="left:405.30px;top:238.00px;font-size:7.6px;color:#ffffff;-webkit-text-stroke:0.3px #fff;letter-spacing:-0.2px">18 m</div>
<div class="a t" style="left:434.80px;top:240.00px;font-size:7.6px;color:#ffffff;-webkit-text-stroke:0.3px #fff;letter-spacing:-0.2px">71 mins</div>
<div class="a t" style="left:402.50px;width:80px;text-align:center;top:256.00px;font-size:7.6px;color:#ffffff;-webkit-text-stroke:0.3px #fff;letter-spacing:-0.2px">Suunto D9</div>
<div class="a" style="left:286.20px;top:303.60px;width:323.50px;height:12.40px;background:#fff;border-radius:3px;box-shadow:0 0 0 0.5px #d2d6dc,0 0.5px 0.8px #c5c9cf"></div>
<div class="a" style="left:286.20px;top:303.60px;width:53.30px;height:12.40px;background:linear-gradient(#f5ad55,#e88c1f);border-radius:3px 0 0 3px"></div>
<div class="a" style="left:384.20px;top:303.60px;width:0.60px;height:12.40px;background:#dcdfe3"></div>
<div class="a" style="left:426.50px;top:303.60px;width:0.60px;height:12.40px;background:#dcdfe3"></div>
<div class="a" style="left:491.40px;top:303.60px;width:0.60px;height:12.40px;background:#dcdfe3"></div>
<div class="a" style="left:551.10px;top:303.60px;width:0.60px;height:12.40px;background:#dcdfe3"></div>
<div class="a t" style="left:282.60px;width:60px;text-align:center;top:306.00px;font-size:9px;color:#fff;-webkit-text-stroke:0.15px #fff">Summary</div>
<div class="a t" style="left:331.70px;width:60px;text-align:center;top:306.00px;font-size:8.6px;color:#1a1a1a;-webkit-text-stroke:0.18px #1a1a1a;">Profiles</div>
<div class="a t" style="left:375.50px;width:60px;text-align:center;top:306.00px;font-size:8.6px;color:#1a1a1a;-webkit-text-stroke:0.18px #1a1a1a;">Details</div>
<div class="a t" style="left:418.90px;width:80px;text-align:center;top:306.00px;font-size:8.6px;color:#1a1a1a;-webkit-text-stroke:0.18px #1a1a1a;">Environment</div>
<div class="a t" style="left:481.10px;width:80px;text-align:center;top:306.00px;font-size:8.6px;color:#1a1a1a;-webkit-text-stroke:0.18px #1a1a1a;">Description</div>
<div class="a t" style="left:540.90px;width:80px;text-align:center;top:306.00px;font-size:8.6px;color:#1a1a1a;-webkit-text-stroke:0.18px #1a1a1a;">Marine Life</div>
<div class="a" style="left:446.80px;top:320.40px;width:3.00px;height:3.00px;border-radius:50%;background:#c9ced6"></div>
<div class="a" style="left:130.00px;top:325.20px;width:635.20px;height:104.40px;background:#fff;overflow:hidden"></div>
<div class="a" style="left:130.00px;top:325.20px;width:635.20px;height:14.80px;background:#ededed;border-bottom:0.6px solid #d6d6d6"></div>
<div class="a" style="left:157.60px;top:326.50px;width:0.60px;height:12.50px;background:#d9d9d9"></div>
<div class="a" style="left:243.50px;top:326.50px;width:0.60px;height:12.50px;background:#d9d9d9"></div>
<div class="a" style="left:329.50px;top:326.50px;width:0.60px;height:12.50px;background:#d9d9d9"></div>
<div class="a" style="left:416.50px;top:326.50px;width:0.60px;height:12.50px;background:#d9d9d9"></div>
<div class="a" style="left:592.30px;top:326.50px;width:0.60px;height:12.50px;background:#d9d9d9"></div>
<div class="a" style="left:678.80px;top:326.50px;width:0.60px;height:12.50px;background:#d9d9d9"></div>
<div class="a t" style="left:161.00px;top:329.00px;font-size:7.9px;color:#222;-webkit-text-stroke:0.15px #222">Dive#</div>
<div class="a t" style="left:246.90px;top:329.00px;font-size:7.9px;color:#222;-webkit-text-stroke:0.15px #222">Date</div>
<div class="a t" style="left:332.60px;top:329.00px;font-size:7.9px;color:#222;-webkit-text-stroke:0.15px #222">Time</div>
<div class="a t" style="left:419.10px;top:329.00px;font-size:7.9px;color:#222;-webkit-text-stroke:0.15px #222">Site</div>
<div class="a t" style="left:595.30px;top:329.00px;font-size:7.9px;color:#222;-webkit-text-stroke:0.15px #222">Length</div>
<div class="a t" style="left:681.70px;top:329.00px;font-size:7.9px;color:#222;-webkit-text-stroke:0.15px #222">MaxDepth</div>
<svg class="a" style="left:235px;top:330px" width="7" height="5" viewBox="0 0 7 5"><path d="M0.8 4.2L3.5 1.2L6.2 4.2" fill="none" stroke="#444" stroke-width="1"/></svg>
<div class="a" style="left:130px;top:340px;width:635.2px;height:89.6px;overflow:hidden">
<div class="a" style="left:0;top:0.00px;width:635.2px;height:12px;background:#fff"></div>
<svg class="a" style="left:9.400000000000006px;top:0.40px" width="10" height="10" viewBox="0 0 10 10"><circle cx="5" cy="5" r="4.4" fill="#1f5fbf"/><circle cx="5" cy="4.2" r="2.6" fill="#3f7dd3"/><path d="M1.6 5.2Q5 9 8.3 5.2" fill="none" stroke="#dfeaf6" stroke-width="1"/><circle cx="7.2" cy="4.6" r="0.8" fill="#d8363a"/></svg>
<div class="a t" style="left:30.20px;top:2.00px;font-size:8.6px;color:#141414;-webkit-text-stroke:0.18px #141414">119</div>
<div class="a t" style="left:116.10px;top:2.00px;font-size:8.6px;color:#141414;-webkit-text-stroke:0.18px #141414">Oct 18, 2017</div>
<div class="a t" style="left:202.00px;top:2.00px;font-size:8.6px;color:#141414;-webkit-text-stroke:0.18px #141414">10:23 AM</div>
<div class="a t" style="left:288.60px;top:2.00px;font-size:8.6px;color:#141414;-webkit-text-stroke:0.18px #141414">The Zoo</div>
<div class="a t" style="left:465.00px;top:2.00px;font-size:8.6px;color:#141414;-webkit-text-stroke:0.18px #141414">79 mins</div>
<div class="a t" style="left:551.00px;top:2.00px;font-size:8.6px;color:#141414;-webkit-text-stroke:0.18px #141414">21.8 m</div>
<div class="a" style="left:0;top:12.00px;width:635.2px;height:12px;background:#f4f5f5"></div>
<svg class="a" style="left:9.400000000000006px;top:12.40px" width="10" height="10" viewBox="0 0 10 10"><circle cx="5" cy="5" r="4.4" fill="#1f5fbf"/><circle cx="5" cy="4.2" r="2.6" fill="#3f7dd3"/><path d="M1.6 5.2Q5 9 8.3 5.2" fill="none" stroke="#dfeaf6" stroke-width="1"/><circle cx="7.2" cy="4.6" r="0.8" fill="#d8363a"/></svg>
<div class="a t" style="left:30.20px;top:14.00px;font-size:8.6px;color:#141414;-webkit-text-stroke:0.18px #141414">120</div>
<div class="a t" style="left:116.10px;top:14.00px;font-size:8.6px;color:#141414;-webkit-text-stroke:0.18px #141414">Oct 18, 2017</div>
<div class="a t" style="left:202.00px;top:14.00px;font-size:8.6px;color:#141414;-webkit-text-stroke:0.18px #141414">2:38 PM</div>
<div class="a t" style="left:288.60px;top:14.00px;font-size:8.6px;color:#141414;-webkit-text-stroke:0.18px #141414">Batfish Wall</div>
<div class="a t" style="left:465.00px;top:14.00px;font-size:8.6px;color:#141414;-webkit-text-stroke:0.18px #141414">71 mins</div>
<div class="a t" style="left:551.00px;top:14.00px;font-size:8.6px;color:#141414;-webkit-text-stroke:0.18px #141414">18 m</div>
<div class="a" style="left:0;top:24.00px;width:635.2px;height:12px;background:#fff"></div>
<svg class="a" style="left:9.400000000000006px;top:24.40px" width="10" height="10" viewBox="0 0 10 10"><circle cx="5" cy="5" r="4.4" fill="#1f5fbf"/><circle cx="5" cy="4.2" r="2.6" fill="#3f7dd3"/><path d="M1.6 5.2Q5 9 8.3 5.2" fill="none" stroke="#dfeaf6" stroke-width="1"/><circle cx="7.2" cy="4.6" r="0.8" fill="#d8363a"/></svg>
<div class="a t" style="left:30.20px;top:26.00px;font-size:8.6px;color:#141414;-webkit-text-stroke:0.18px #141414">121</div>
<div class="a t" style="left:116.10px;top:26.00px;font-size:8.6px;color:#141414;-webkit-text-stroke:0.18px #141414">Oct 19, 2017</div>
<div class="a t" style="left:202.00px;top:26.00px;font-size:8.6px;color:#141414;-webkit-text-stroke:0.18px #141414">8:02 AM</div>
<div class="a t" style="left:288.60px;top:26.00px;font-size:8.6px;color:#141414;-webkit-text-stroke:0.18px #141414">Starship</div>
<div class="a t" style="left:465.00px;top:26.00px;font-size:8.6px;color:#141414;-webkit-text-stroke:0.18px #141414">72 mins</div>
<div class="a t" style="left:551.00px;top:26.00px;font-size:8.6px;color:#141414;-webkit-text-stroke:0.18px #141414">19.2 m</div>
<div class="a" style="left:0;top:36.00px;width:635.2px;height:12px;background:#dcdcdc"></div>
<svg class="a" style="left:9.400000000000006px;top:36.40px" width="10" height="10" viewBox="0 0 10 10"><circle cx="5" cy="5" r="4.4" fill="#1f5fbf"/><circle cx="5" cy="4.2" r="2.6" fill="#3f7dd3"/><path d="M1.6 5.2Q5 9 8.3 5.2" fill="none" stroke="#dfeaf6" stroke-width="1"/><circle cx="7.2" cy="4.6" r="0.8" fill="#d8363a"/></svg>
<div class="a t" style="left:30.20px;top:38.00px;font-size:8.6px;color:#141414;-webkit-text-stroke:0.18px #141414">122</div>
<div class="a t" style="left:116.10px;top:38.00px;font-size:8.6px;color:#141414;-webkit-text-stroke:0.18px #141414">Oct 19, 2017</div>
<div class="a t" style="left:202.00px;top:38.00px;font-size:8.6px;color:#141414;-webkit-text-stroke:0.18px #141414">10:28 AM</div>
<div class="a t" style="left:288.60px;top:38.00px;font-size:8.6px;color:#141414;-webkit-text-stroke:0.18px #141414">Roma</div>
<div class="a t" style="left:465.00px;top:38.00px;font-size:8.6px;color:#141414;-webkit-text-stroke:0.18px #141414">71 mins</div>
<div class="a t" style="left:551.00px;top:38.00px;font-size:8.6px;color:#141414;-webkit-text-stroke:0.18px #141414">18 m</div>
<div class="a" style="left:0;top:48.00px;width:635.2px;height:12px;background:#fff"></div>
<svg class="a" style="left:9.400000000000006px;top:48.40px" width="10" height="10" viewBox="0 0 10 10"><circle cx="5" cy="5" r="4.4" fill="#1f5fbf"/><circle cx="5" cy="4.2" r="2.6" fill="#3f7dd3"/><path d="M1.6 5.2Q5 9 8.3 5.2" fill="none" stroke="#dfeaf6" stroke-width="1"/><circle cx="7.2" cy="4.6" r="0.8" fill="#d8363a"/></svg>
<div class="a t" style="left:30.20px;top:50.00px;font-size:8.6px;color:#141414;-webkit-text-stroke:0.18px #141414">123</div>
<div class="a t" style="left:116.10px;top:50.00px;font-size:8.6px;color:#141414;-webkit-text-stroke:0.18px #141414">Oct 19, 2017</div>
<div class="a t" style="left:202.00px;top:50.00px;font-size:8.6px;color:#141414;-webkit-text-stroke:0.18px #141414">5:54 PM</div>
<div class="a t" style="left:288.60px;top:50.00px;font-size:8.6px;color:#141414;-webkit-text-stroke:0.18px #141414">Teluk Waitii</div>
<div class="a t" style="left:465.00px;top:50.00px;font-size:8.6px;color:#141414;-webkit-text-stroke:0.18px #141414">72 mins</div>
<div class="a t" style="left:551.00px;top:50.00px;font-size:8.6px;color:#141414;-webkit-text-stroke:0.18px #141414">19.1 m</div>
<div class="a" style="left:0;top:60.00px;width:635.2px;height:12px;background:#f4f5f5"></div>
<svg class="a" style="left:9.400000000000006px;top:60.40px" width="10" height="10" viewBox="0 0 10 10"><circle cx="5" cy="5" r="4.4" fill="#1f5fbf"/><circle cx="5" cy="4.2" r="2.6" fill="#3f7dd3"/><path d="M1.6 5.2Q5 9 8.3 5.2" fill="none" stroke="#dfeaf6" stroke-width="1"/><circle cx="7.2" cy="4.6" r="0.8" fill="#d8363a"/></svg>
<div class="a t" style="left:30.20px;top:62.00px;font-size:8.6px;color:#141414;-webkit-text-stroke:0.18px #141414">124</div>
<div class="a t" style="left:116.10px;top:62.00px;font-size:8.6px;color:#141414;-webkit-text-stroke:0.18px #141414">Oct 20, 2017</div>
<div class="a t" style="left:202.00px;top:62.00px;font-size:8.6px;color:#141414;-webkit-text-stroke:0.18px #141414">7:53 AM</div>
<div class="a t" style="left:288.60px;top:62.00px;font-size:8.6px;color:#141414;-webkit-text-stroke:0.18px #141414">Table Coral City</div>
<div class="a t" style="left:465.00px;top:62.00px;font-size:8.6px;color:#141414;-webkit-text-stroke:0.18px #141414">78 mins</div>
<div class="a t" style="left:551.00px;top:62.00px;font-size:8.6px;color:#141414;-webkit-text-stroke:0.18px #141414">21.7 m</div>
<div class="a" style="left:0;top:72.00px;width:635.2px;height:12px;background:#fff"></div>
<svg class="a" style="left:9.400000000000006px;top:72.40px" width="10" height="10" viewBox="0 0 10 10"><circle cx="5" cy="5" r="4.4" fill="#1f5fbf"/><circle cx="5" cy="4.2" r="2.6" fill="#3f7dd3"/><path d="M1.6 5.2Q5 9 8.3 5.2" fill="none" stroke="#dfeaf6" stroke-width="1"/><circle cx="7.2" cy="4.6" r="0.8" fill="#d8363a"/></svg>
<div class="a t" style="left:30.20px;top:74.00px;font-size:8.6px;color:#141414;-webkit-text-stroke:0.18px #141414">125</div>
<div class="a t" style="left:116.10px;top:74.00px;font-size:8.6px;color:#141414;-webkit-text-stroke:0.18px #141414">Oct 20, 2017</div>
<div class="a t" style="left:202.00px;top:74.00px;font-size:8.6px;color:#141414;-webkit-text-stroke:0.18px #141414">10:12 AM</div>
<div class="a t" style="left:288.60px;top:74.00px;font-size:8.6px;color:#141414;-webkit-text-stroke:0.18px #141414">Spiral Corner</div>
<div class="a t" style="left:465.00px;top:74.00px;font-size:8.6px;color:#141414;-webkit-text-stroke:0.18px #141414">71 mins</div>
<div class="a t" style="left:551.00px;top:74.00px;font-size:8.6px;color:#141414;-webkit-text-stroke:0.18px #141414">13.8 m</div>
<div class="a" style="left:0;top:84.00px;width:635.2px;height:12px;background:#f4f5f5"></div>
<svg class="a" style="left:9.400000000000006px;top:84.40px" width="10" height="10" viewBox="0 0 10 10"><circle cx="5" cy="5" r="4.4" fill="#1f5fbf"/><circle cx="5" cy="4.2" r="2.6" fill="#3f7dd3"/><path d="M1.6 5.2Q5 9 8.3 5.2" fill="none" stroke="#dfeaf6" stroke-width="1"/><circle cx="7.2" cy="4.6" r="0.8" fill="#d8363a"/></svg>
<div class="a t" style="left:30.20px;top:86.00px;font-size:8.6px;color:#141414;-webkit-text-stroke:0.18px #141414">126</div>
<div class="a t" style="left:116.10px;top:86.00px;font-size:8.6px;color:#141414;-webkit-text-stroke:0.18px #141414">Oct 20, 2017</div>
<div class="a t" style="left:202.00px;top:86.00px;font-size:8.6px;color:#141414;-webkit-text-stroke:0.18px #141414">2:40 PM</div>
<div class="a t" style="left:288.60px;top:86.00px;font-size:8.6px;color:#141414;-webkit-text-stroke:0.18px #141414">Coral Kita</div>
<div class="a t" style="left:465.00px;top:86.00px;font-size:8.6px;color:#141414;-webkit-text-stroke:0.18px #141414">79 mins</div>
<div class="a t" style="left:551.00px;top:86.00px;font-size:8.6px;color:#141414;-webkit-text-stroke:0.18px #141414">20.0 m</div>
</div>
<div class="a" style="left:130.00px;top:340.00px;width:635.20px;height:0.90px;background:#d4d4d4"></div>
<div class="a" style="left:130.00px;top:325.20px;width:635.20px;height:0.80px;background:#d9dee6"></div>
<div class="a" style="left:3.00px;top:429.60px;width:763.00px;height:6.40px;background:#e8e8e8;border-top:0.5px solid #d5d5d5"></div>
</div>
<svg class="a" style="left:0;top:0" width="770" height="440" viewBox="0 0 770 440"><path fill-rule="evenodd" fill="#000" d="M0 0H770V440H0Z M8 1.2H761A5 5 0 0 1 766 6.2V430.5A5 5 0 0 1 761 435.5H8A5 5 0 0 1 3 430.5V6.2A5 5 0 0 1 8 1.2Z"/></svg>
</body></html>
